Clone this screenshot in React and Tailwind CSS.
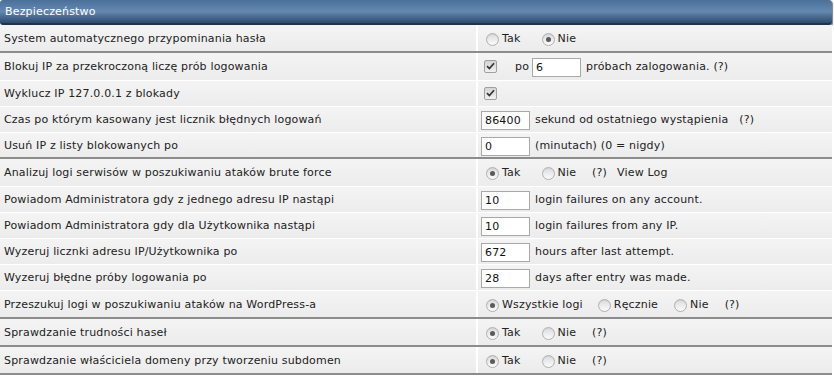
import React from "react";

const font = { fontFamily: "Verdana, 'DejaVu Sans', sans-serif" };

function Radio({ checked, label, className = "" }) {
  return (
    <span className={`inline-flex items-center ${className}`}>
      <span className="relative inline-block h-[13px] w-[13px] rounded-full border border-[#b0b0b0] bg-gradient-to-b from-[#dcdcdc] to-[#fbfbfb] shadow-[inset_0_1px_1px_rgba(0,0,0,0.06)]">
        {checked && (
          <span className="absolute left-[3px] top-[3px] h-[5px] w-[5px] rounded-full bg-[#5a5a5a]" />
        )}
      </span>
      <span className="ml-[3px]">{label}</span>
    </span>
  );
}

function Check() {
  return (
    <span className="relative inline-flex h-[13px] w-[13px] items-center justify-center rounded-[2px] border border-[#a0a0a0] bg-gradient-to-b from-[#d4d4d4] to-[#f0f0f0]">
      <svg width="9" height="8" viewBox="0 0 9 8">
        <path d="M1 4.2 L3.4 6.5 L8 1.2" fill="none" stroke="#333" strokeWidth="1.7" />
      </svg>
    </span>
  );
}

function Field({ value }) {
  return (
    <input
      readOnly
      value={value}
      className="h-[19px] w-[49px] border border-[#a9a9a9] bg-white px-[3px] text-[11px] tracking-[0.17px] text-[#111] outline-none"
      style={font}
    />
  );
}

function Row({ label, h, sep, children }) {
  const border = sep ? "border-b-2 border-[#8c8c8c]" : "border-b border-white";
  return (
    <div className={`flex ${h} ${border} bg-gradient-to-b from-[#f4f4f4] to-[#ececec]`}>
      <div className="flex w-[478px] items-center border-r-2 border-white pl-[4px] pt-[2px]">{label}</div>
      <div className="flex flex-1 items-center pt-[2px]">{children}</div>
    </div>
  );
}

function TakNie({ tak }) {
  return (
    <>
      <Radio checked={tak} label="Tak" className="ml-[8px]" />
      <Radio checked={!tak} label="Nie" className="ml-[21px]" />
    </>
  );
}

export default function App() {
  return (
    <div className="h-[376px] w-[834px] bg-white text-[11px] tracking-[0.17px] text-[#222]" style={font}>
      <div className="w-[832px]">
        <div className="flex h-[25px] items-center rounded-[3px] border-b-2 border-[#1d3450] bg-gradient-to-b from-[#4a709a] via-[#6588b0] to-[#2d4b6e] pl-[5px] pt-[1px] text-white shadow-[1px_1px_1px_rgba(0,0,0,0.5)]">
          Bezpieczeństwo
        </div>

        <Row label="System automatycznego przypominania hasła" h="h-[28px]" sep>
          <TakNie tak={false} />
        </Row>
        <Row label="Blokuj IP za przekroczoną liczę prób logowania" h="h-[28px]">
          <span className="ml-[6px]"><Check /></span>
          <span className="ml-[18px] mr-[3px]">po</span>
          <Field value="6" />
          <span className="ml-[5px]">próbach zalogowania. (?)</span>
        </Row>
        <Row label="Wyklucz IP 127.0.0.1 z blokady" h="h-[26px]">
          <span className="ml-[6px]"><Check /></span>
        </Row>
        <Row label="Czas po którym kasowany jest licznik błędnych logowań" h="h-[26px]">
          <span className="ml-[3px]"><Field value="86400" /></span>
          <span className="ml-[5px] whitespace-pre">sekund od ostatniego wystąpienia   (?)</span>
        </Row>
        <Row label="Usuń IP z listy blokowanych po" h="h-[26px]" sep>
          <span className="ml-[3px]"><Field value="0" /></span>
          <span className="ml-[5px]">(minutach) (0 = nigdy)</span>
        </Row>
        <Row label="Analizuj logi serwisów w poszukiwaniu ataków brute force" h="h-[28px]">
          <TakNie tak />
          <span className="ml-[16px]">(?)</span>
          <span className="ml-[10px]">View Log</span>
        </Row>
        <Row label="Powiadom Administratora gdy z jednego adresu IP nastąpi" h="h-[26px]">
          <span className="ml-[3px]"><Field value="10" /></span>
          <span className="ml-[5px]">login failures on any account.</span>
        </Row>
        <Row label="Powiadom Administratora gdy dla Użytkownika nastąpi" h="h-[26px]">
          <span className="ml-[3px]"><Field value="10" /></span>
          <span className="ml-[5px]">login failures from any IP.</span>
        </Row>
        <Row label="Wyzeruj licznki adresu IP/Użytkownika po" h="h-[26px]">
          <span className="ml-[3px]"><Field value="672" /></span>
          <span className="ml-[5px]">hours after last attempt.</span>
        </Row>
        <Row label="Wyzeruj błędne próby logowania po" h="h-[26px]">
          <span className="ml-[3px]"><Field value="28" /></span>
          <span className="ml-[5px]">days after entry was made.</span>
        </Row>
        <Row label="Przeszukuj logi w poszukiwaniu ataków na WordPress-a" h="h-[28px]" sep>
          <Radio checked label="Wszystkie logi" className="ml-[8px]" />
          <Radio label="Ręcznie" className="ml-[15px]" />
          <Radio label="Nie" className="ml-[16px]" />
          <span className="ml-[16px]">(?)</span>
        </Row>
        <Row label="Sprawdzanie trudności haseł" h="h-[28px]" sep>
          <TakNie tak />
          <span className="ml-[16px]">(?)</span>
        </Row>
        <Row label="Sprawdzanie właściciela domeny przy tworzeniu subdomen" h="h-[28px]" sep>
          <TakNie tak />
          <span className="ml-[16px]">(?)</span>
        </Row>
      </div>
    </div>
  );
}
